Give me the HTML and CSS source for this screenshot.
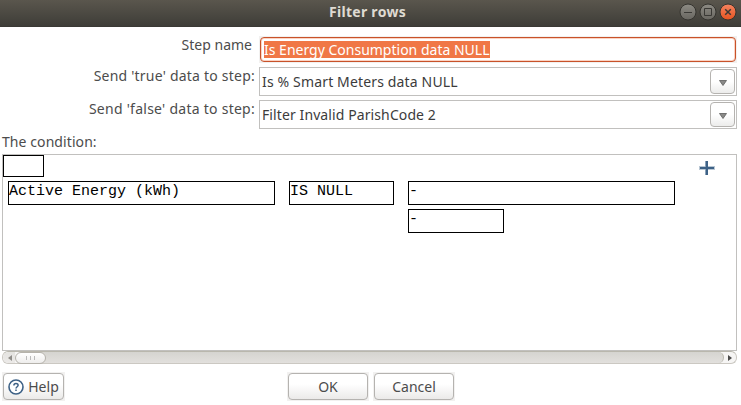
FILE: index.html
```
<!DOCTYPE html>
<html lang="en">
<head>
<meta charset="utf-8">
<title>Filter rows</title>
<link rel="stylesheet" href="styles.css">
</head>
<body>
<header class="titlebar">
  <h1 class="title"><span class="t-title">Filter rows</span></h1>
  <div class="controls">
    <svg class="ctl" viewBox="0 0 18 18"><circle cx="9" cy="9" r="8" class="gray"/><path d="M5 9.5h8" class="mark"/></svg>
    <svg class="ctl" viewBox="0 0 18 18"><circle cx="9" cy="9" r="8" class="gray"/><path d="M5.5 5.5h7v7h-7z" class="mark"/></svg>
    <svg class="ctl" viewBox="0 0 18 18"><defs><linearGradient id="o" x2="0" y2="1"><stop stop-color="#f58461"/><stop offset="1" stop-color="#e6531f"/></linearGradient><linearGradient id="g" x2="0" y2="1"><stop stop-color="#8d8b84"/><stop offset="1" stop-color="#686660"/></linearGradient></defs><circle cx="9" cy="9" r="8" class="orange"/><path d="M6.2 6.2l5.6 5.6M11.8 6.2l-5.6 5.6" class="mark cross"/></svg>
  </div>
</header>
<main>
  <div class="form">
    <label class="l1"><span class="t-step">Step name</span></label>
    <div class="entry"><div class="entry-in"><span class="sel"><span class="t-name">Is Energy Consumption data NULL</span></span></div></div>
    <label class="l2"><span class="t-true">Send 'true' data to step:</span></label>
    <div class="combo"><span class="t-smart">Is % Smart Meters data NULL</span><span class="drop"><svg width="8" height="6" viewBox="0 0 8 6"><path d="M.5.5h7L4 5.5z" fill="#8a8a88" stroke="#5c5c5a" stroke-width=".8"/></svg></span></div>
    <label class="l3"><span class="t-false">Send 'false' data to step:</span></label>
    <div class="combo"><span class="t-parish">Filter Invalid ParishCode 2</span><span class="drop"><svg width="8" height="6" viewBox="0 0 8 6"><path d="M.5.5h7L4 5.5z" fill="#8a8a88" stroke="#5c5c5a" stroke-width=".8"/></svg></span></div>
  </div>
  <div class="caption"><span class="t-cond">The condition:</span></div>
  <section class="canvas">
    <div class="top"><div class="not"></div>
      <svg class="plus" width="16" height="16" viewBox="0 0 16 16"><path d="M0 8h16" stroke="#b9c7d4" stroke-width="4"/><path d="M7.5 1v14" stroke="#8ba2b9" stroke-width="3"/><path d="M8 1v14M1 8h14" stroke="#3d6186" stroke-width="2"/></svg>
    </div>
    <div class="cond">
      <div class="cell">Active Energy (kWh)</div>
      <div class="cell">IS NULL</div>
      <div class="cell">-</div>
      <div class="cell exact">-</div>
    </div>
  </section>
  <div class="scroll">
    <span class="arrow left"><svg width="4" height="6" viewBox="0 0 4 6"><path d="M4 0v6L0 3z" fill="#8e8c88"/></svg></span>
    <span class="thumb"><i></i><i></i><i></i></span>
    <span class="trough"></span>
    <span class="arrow right"><svg width="4" height="6" viewBox="0 0 4 6"><path d="M0 0v6l4-3z" fill="#4b4b4a"/></svg></span>
  </div>
  <footer>
    <div class="wrap help"><button><svg width="16" height="16" viewBox="0 0 16 16"><circle cx="8" cy="8" r="7" fill="#fff" stroke="#3d6186" stroke-width="1.6"/><path d="M5.9 6.4C5.9 3.8 10.1 3.8 10.1 6.3 10.1 7.8 8 7.8 8 9.6M8 10.6v1.5" fill="none" stroke="#3d6186" stroke-width="1.5"/></svg><span class="t-help">Help</span></button></div>
    <div class="wrap"><button><span class="t-ok">OK</span></button></div>
    <div class="wrap"><button><span class="t-cancel">Cancel</span></button></div>
  </footer>
</main>
</body>
</html>
```
FILE: styles.css
```
* { box-sizing: border-box; }
body { margin: 0; width: 741px; height: 405px; overflow: hidden; background: #fff; color: #4c4c4c; font: 14px/18px "Noto Sans", "Open Sans", sans-serif; white-space: nowrap; }
svg { display: block; flex: none; }

.titlebar { display: grid; grid-template-columns: 1fr auto; height: 27px; background: linear-gradient(#5a564d, #3e3d38); border-bottom: 1px solid #3a3935; color: #dfdbd2; }
.title { grid-area: 1 / 1 / 2 / 3; margin: 0; padding: 3px 6px 0 0; text-align: center; font-size: 14px; line-height: 18px; }
.controls { grid-area: 1 / 2; display: flex; gap: 2px; padding: 3px 4px 0 0; }
.ctl { width: 18px; height: 18px; }
.gray { fill: url(#g); stroke: #35342f; }
.orange { fill: url(#o); stroke: #35342f; }
.mark { fill: none; stroke: #3a3935; }
.cross { stroke-width: 1.5; }

.t-title { letter-spacing: .28px; }
.t-true { letter-spacing: .22px; }
.t-false { letter-spacing: .26px; }
.t-smart { letter-spacing: .15px; }
.t-parish { letter-spacing: .1px; }
.t-cond { letter-spacing: .08px; }

.form { display: grid; grid-template-columns: 255px 478px; grid-template-rows: 27px 29px 29px; column-gap: 4px; row-gap: 4px; padding-top: 9px; }
label { text-align: right; }
.l1 { padding-right: 3px; }
.entry { background: #f2f1f0; padding: 1px 1px 0; height: 27px; }
.entry-in { height: 25px; border: 1px solid #c8522a; border-radius: 4px; background: #fff; box-shadow: inset 0 0 0 1px #fbd3c3; padding: 3px; }
.sel { display: block; width: 226px; height: 17px; line-height: 18px; background: #f07746; color: #fff; }
.combo { display: flex; justify-content: space-between; height: 29px; border: 1px solid #c1c0be; padding: 1px 1px 0 2px; line-height: 26px; color: #3c3c3c; }
.drop { display: flex; align-items: center; justify-content: center; width: 25px; height: 25px; padding-top: 2px; border: 1px solid #b5b3b0; border-radius: 4px; background: linear-gradient(#fff 50%, #ececeb); }
.caption { height: 25px; padding: 4px 0 0 2px; }

.canvas { margin-left: 2px; width: 735px; height: 197px; border: 1px solid #c1c0be; color: #000; font: 15px/17px "Liberation Mono", monospace; }
.top { display: flex; justify-content: space-between; height: 26px; padding-right: 21px; }
.not { width: 41px; height: 22px; border: 1px solid #000; }
.plus { margin-top: 5px; }
.cond { display: grid; grid-template-columns: 267px 105px 267px; gap: 4px 14px; padding-left: 5px; }
.cell { height: 24px; padding-top: 1px; border: 1px solid #000; }
.exact { grid-column: 3; width: 96px; }

.scroll { display: flex; align-items: center; margin-left: 2px; width: 735px; height: 13px; background: #f6f5f4; border: 1px solid #cbc8c2; border-top-color: #b9b7ad; border-radius: 6px; }
.arrow { width: 12px; padding-left: 5px; }
.left { display: flex; align-items: center; height: 11px; border-radius: 6px 0 0 6px; background: linear-gradient(#e4e3e0, #eceae8); }
.thumb { display: flex; align-items: center; justify-content: center; gap: 2px; width: 31px; height: 12px; border: 1px solid #b5b2ab; border-radius: 6px; background: linear-gradient(#fff, #eeedec); }
.thumb i { width: 1px; height: 4px; background: #bbb; margin-right: 1px; }
.trough { flex: 1; height: 11px; margin-left: -5px; background: linear-gradient(#d5d4d0, #e2e0dd); border-right: 1px solid #b9b7ad; border-radius: 0 6px 6px 0; }
.thumb { position: relative; }
.right { height: 11px; display: flex; align-items: center; width: 12px; padding-left: 4px; }

footer { display: grid; grid-template-columns: 281px 82px 82px; column-gap: 4px; padding: 8px 0 0 2px; }
.wrap { height: 29px; padding: 1px; background: #f2f1f0; }
.help { width: 63px; }
button { display: flex; align-items: center; justify-content: center; gap: 4px; width: 100%; height: 27px; padding: 0; border: 1px solid #b5b3b0; border-radius: 4px; background: linear-gradient(#fff 40%, #ebeae9); color: #4c4c4c; font: inherit; }
```
